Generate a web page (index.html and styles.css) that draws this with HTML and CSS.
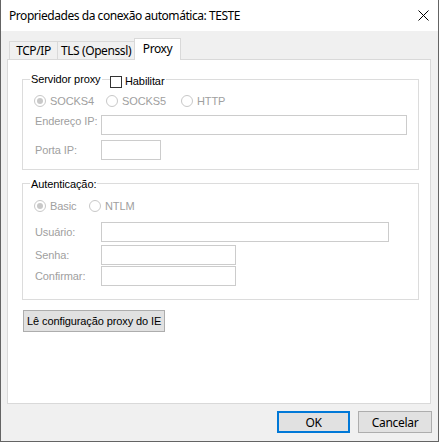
FILE: index.html
```html
<!DOCTYPE html>
<html lang="pt-BR">
<head>
<meta charset="utf-8">
<title>Propriedades da conexão automática: TESTE</title>
<link rel="stylesheet" href="styles.css">
</head>
<body>
<div class="window">
  <div class="titlebar">
    <span class="title">Propriedades da conexão automática: TESTE</span>
    <svg class="close" width="11" height="11" viewBox="0 0 11 11"><path d="M0.5 0.5 L10.5 10.5 M10.5 0.5 L0.5 10.5" stroke="#000" stroke-width="1" fill="none"/></svg>
  </div>
  <div class="client">
    <div class="tabs">
      <div class="tab tab-tcp">TCP/IP</div>
      <div class="tab tab-tls">TLS (Openssl)</div>
      <div class="tab tab-proxy active">Proxy</div>
    </div>
    <div class="panel">
      <div class="group group-server">
        <span class="legend">Servidor proxy</span>
        <label class="legend-check"><span class="checkbox"></span>Habilitar</label>
        <div class="radios">
          <span class="radio checked w72"><i></i>SOCKS4</span>
          <span class="radio w75"><i></i>SOCKS5</span>
          <span class="radio"><i></i>HTTP</span>
        </div>
        <div class="field field-ip">
          <span class="lbl lbl-top">Endereço IP:</span>
          <span class="input w-ip"></span>
        </div>
        <div class="field field-port">
          <span class="lbl">Porta IP:</span>
          <span class="input w-port"></span>
        </div>
      </div>
      <div class="group group-auth">
        <span class="legend legend-auth">Autenticação:</span>
        <div class="radios">
          <span class="radio checked w55"><i></i>Basic</span>
          <span class="radio"><i></i>NTLM</span>
        </div>
        <div class="field field-user">
          <span class="lbl">Usuário:</span>
          <span class="input w-user"></span>
        </div>
        <div class="field field-pass">
          <span class="lbl">Senha:</span>
          <span class="input w-pass"></span>
        </div>
        <div class="field field-confirm">
          <span class="lbl">Confirmar:</span>
          <span class="input w-pass"></span>
        </div>
      </div>
      <button class="btn btn-ie">Lê configuração proxy do IE</button>
    </div>
    <div class="footer">
      <button class="btn btn-ok">OK</button>
      <button class="btn btn-cancel">Cancelar</button>
    </div>
  </div>
</div>
</body>
</html>
```
FILE: styles.css
```css
html, body {
  margin: 0;
  padding: 0;
  background: #ffffff;
}

.window {
  width: 439px;
  height: 442px;
  box-sizing: border-box;
  border: 1px solid #646464;
  border-top: none;
  background: #f0f0f0;
  display: flex;
  flex-direction: column;
  font-family: "Liberation Sans", Arial, sans-serif;
  font-size: 11px;
  letter-spacing: -0.1px;
  color: #000;
}

.titlebar {
  flex: none;
  height: 31px;
  background: #fff;
  display: flex;
  align-items: center;
  justify-content: space-between;
  padding: 0 9px 0 8px;
}

.title {
  font-family: "Noto Sans", sans-serif;
  font-size: 12px;
  letter-spacing: -0.45px;
  line-height: 16px;
}

.close {
  display: block;
}

.client {
  flex: 1;
  display: flex;
  flex-direction: column;
  padding: 7px 7px 0 6px;
}

.tabs {
  display: flex;
  align-items: flex-end;
  height: 22px;
  padding-left: 2px;
  margin-bottom: -1px;
  position: relative;
  z-index: 1;
}

.tab {
  box-sizing: border-box;
  height: 18px;
  margin-bottom: 1px;
  border: 1px solid #d9d9d9;
  border-bottom: none;
  background: #f0f0f0;
  font-family: "Noto Sans", sans-serif;
  font-size: 12px;
  letter-spacing: -0.4px;
  display: flex;
  align-items: center;
  justify-content: center;
}

.tab-tcp { width: 49px; }
.tab-tls { width: 78px; margin-left: -1px; }
.tab-proxy { width: 47px; margin-left: -1px; }

.tab.active {
  height: 22px;
  margin-bottom: 0;
  background: #fff;
  padding-bottom: 3px;
}

.panel {
  box-sizing: border-box;
  height: 345px;
  background: #fff;
  border: 1px solid #d9d9d9;
  padding: 19px 11px 0 14px;
}

.group {
  position: relative;
  border: 1px solid #dcdcdc;
  padding-left: 11px;
}

.group-server {
  padding-top: 14px;
  padding-bottom: 9px;
}

.group-auth {
  margin-top: 13px;
  padding-top: 15px;
  padding-bottom: 13px;
}

.legend {
  position: absolute;
  top: -7px;
  left: 7px;
  padding: 0 1px;
  background: #fff;
  line-height: 13px;
}

.legend-auth {
  top: -6px;
}

.legend-check {
  position: absolute;
  top: -5px;
  left: 87px;
  display: flex;
  align-items: flex-start;
  line-height: 13px;
  background: #fff;
  padding-right: 2px;
}

.checkbox {
  box-sizing: border-box;
  width: 12px;
  height: 12px;
  margin-top: 1px;
  margin-right: 3px;
  border: 1px solid #333;
  background: #fff;
}

.radios {
  display: flex;
  align-items: center;
  height: 14px;
}

.radio {
  display: flex;
  align-items: center;
  color: #a0a0a0;
  line-height: 13px;
}

.radio i {
  box-sizing: border-box;
  width: 12px;
  height: 12px;
  margin-right: 4px;
  border: 1px solid #c8c8c8;
  border-radius: 50%;
  display: flex;
  align-items: center;
  justify-content: center;
}

.radio.checked i::after {
  content: "";
  width: 6px;
  height: 6px;
  border-radius: 50%;
  background: #c8c8c8;
}

.w72 { width: 72px; }
.w75 { width: 75px; }
.w55 { width: 55px; }

.field {
  display: flex;
  align-items: center;
  height: 20px;
}

.field-ip { margin-top: 7px; }
.field-port { margin-top: 5px; }
.field-user { margin-top: 9px; }
.field-pass { margin-top: 3px; }
.field-confirm { margin-top: 1px; }

.lbl {
  width: 66px;
  padding-left: 1px;
  color: #a0a0a0;
  line-height: 13px;
}

.lbl-top {
  align-self: flex-start;
}

.input {
  box-sizing: border-box;
  height: 20px;
  border: 1px solid #cccccc;
  background: #fff;
}

.w-ip { width: 306px; }
.w-port { width: 60px; }
.w-user { width: 288px; }
.w-pass { width: 135px; }

.btn {
  box-sizing: border-box;
  margin: 0;
  padding: 0;
  background: #e1e1e1;
  border: 1px solid #adadad;
  color: #000;
  font: inherit;
  letter-spacing: inherit;
}

.btn-ie {
  display: block;
  margin-top: 10px;
  margin-left: 1px;
  width: 142px;
  height: 22px;
  text-align: left;
  padding-left: 3px;
  white-space: nowrap;
}

.footer {
  display: flex;
  justify-content: flex-end;
  gap: 8px;
  margin-top: 7px;
  margin-right: -1px;
}

.btn-ok,
.btn-cancel {
  height: 22px;
  font-family: "Noto Sans", sans-serif;
  font-size: 12px;
  letter-spacing: -0.3px;
}

.btn-ok {
  width: 73px;
  border: 2px solid #0078d7;
}

.btn-cancel {
  width: 74px;
}
```
